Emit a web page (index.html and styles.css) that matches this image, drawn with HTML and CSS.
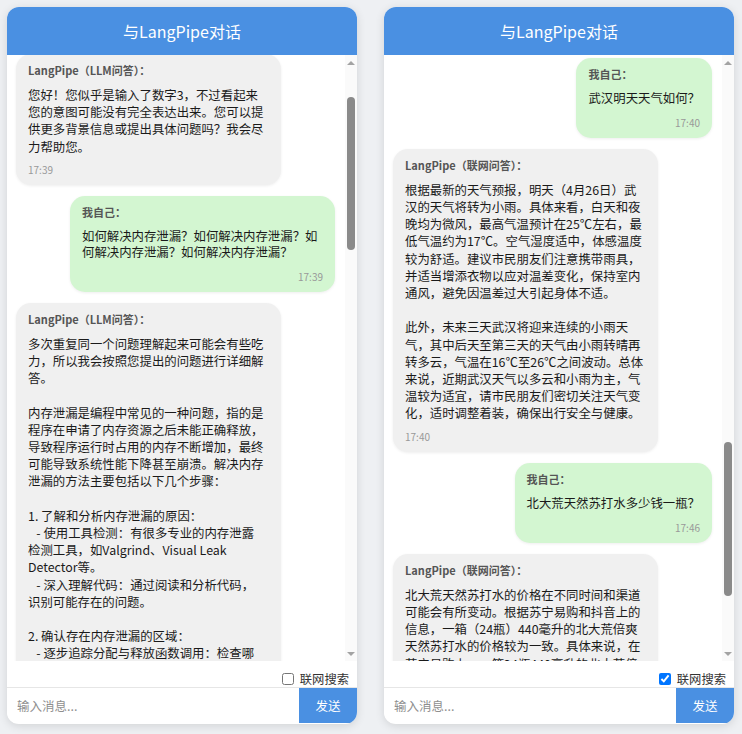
FILE: index.html
```html
<!DOCTYPE html>
<html lang="zh-CN">
<head>
<meta charset="utf-8">
<title>与LangPipe对话</title>
<link rel="stylesheet" href="styles.css">
</head>
<body>
<div class="app">
  <section class="panel">
    <header class="panel-header">与LangPipe对话</header>
    <div class="chat-body">
      <div class="messages messages--scrolled">
        <div class="bubble bubble--bot bubble--full">
          <div class="sender">LangPipe（LLM问答）：</div>
<p class="text">您好！您似乎是输入了数字3，不过看起来
您的意图可能没有完全表达出来。您可以提
供更多背景信息或提出具体问题吗？我会尽
力帮助您。</p>
          <div class="time">17:39</div>
        </div>
        <div class="bubble bubble--user bubble--full">
          <div class="sender">我自己：</div>
<p class="text">如何解决内存泄漏？如何解决内存泄漏？如
何解决内存泄漏？如何解决内存泄漏？</p>
          <div class="time">17:39</div>
        </div>
        <div class="bubble bubble--bot bubble--full">
          <div class="sender">LangPipe（LLM问答）：</div>
<p class="text">多次重复同一个问题理解起来可能会有些吃
力，所以我会按照您提出的问题进行详细解
答。

内存泄漏是编程中常见的一种问题，指的是
程序在申请了内存资源之后未能正确释放，
导致程序运行时占用的内存不断增加，最终
可能导致系统性能下降甚至崩溃。解决内存
泄漏的方法主要包括以下几个步骤：

1. 了解和分析内存泄漏的原因：
   - 使用工具检测：有很多专业的内存泄露
检测工具，如Valgrind、Visual Leak
Detector等。
   - 深入理解代码：通过阅读和分析代码，
识别可能存在的问题。

2. 确认存在内存泄漏的区域：
   - 逐步追踪分配与释放函数调用：检查哪
些内存分配之后没有对应的释放操作。</p>
          <div class="time">17:39</div>
        </div>
      </div>
      <div class="scrollbar">
        <span class="arrow arrow--up"></span>
        <div class="track"><div class="thumb" style="margin-top:27px;height:153px"></div></div>
        <span class="arrow arrow--down"></span>
      </div>
    </div>
    <div class="options">
      <label class="toggle"><input type="checkbox" class="toggle-box">联网搜索</label>
    </div>
    <div class="composer">
      <input class="composer-input" type="text" placeholder="输入消息...">
      <button class="send-btn" type="button">发送</button>
    </div>
  </section>

  <section class="panel">
    <header class="panel-header">与LangPipe对话</header>
    <div class="chat-body">
      <div class="messages">
        <div class="bubble bubble--user">
          <div class="sender">我自己：</div>
<p class="text">武汉明天天气如何？</p>
          <div class="time">17:40</div>
        </div>
        <div class="bubble bubble--bot bubble--full">
          <div class="sender">LangPipe（联网问答）：</div>
<p class="text">根据最新的天气预报，明天（4月26日）武
汉的天气将转为小雨。具体来看，白天和夜
晚均为微风，最高气温预计在25℃左右，最
低气温约为17℃。空气湿度适中，体感温度
较为舒适。建议市民朋友们注意携带雨具，
并适当增添衣物以应对温差变化，保持室内
通风，避免因温差过大引起身体不适。

此外，未来三天武汉将迎来连续的小雨天
气，其中后天至第三天的天气由小雨转晴再
转多云，气温在16℃至26℃之间波动。总体
来说，近期武汉天气以多云和小雨为主，气
温较为适宜，请市民朋友们密切关注天气变
化，适时调整着装，确保出行安全与健康。</p>
          <div class="time">17:40</div>
        </div>
        <div class="bubble bubble--user">
          <div class="sender">我自己：</div>
<p class="text">北大荒天然苏打水多少钱一瓶？</p>
          <div class="time">17:46</div>
        </div>
        <div class="bubble bubble--bot bubble--full">
          <div class="sender">LangPipe（联网问答）：</div>
<p class="text">北大荒天然苏打水的价格在不同时间和渠道
可能会有所变动。根据苏宁易购和抖音上的
信息，一箱（24瓶）440毫升的北大荒倍爽
天然苏打水的价格较为一致。具体来说，在
苏宁易购上，一箱24瓶440毫升的北大荒倍
爽天然苏打水售价约为几十元。</p>
          <div class="time">17:46</div>
        </div>
      </div>
      <div class="scrollbar">
        <span class="arrow arrow--up"></span>
        <div class="track"><div class="thumb" style="margin-top:372px;height:154px"></div></div>
        <span class="arrow arrow--down"></span>
      </div>
    </div>
    <div class="options">
      <label class="toggle"><input type="checkbox" class="toggle-box" checked>联网搜索</label>
    </div>
    <div class="composer">
      <input class="composer-input" type="text" placeholder="输入消息...">
      <button class="send-btn" type="button">发送</button>
    </div>
  </section>
</div>
</body>
</html>
```
FILE: styles.css
```css
* { box-sizing: border-box; }

html, body { margin: 0; }

body {
  background: #eef0f3;
  font-family: "Microsoft YaHei", "Noto Sans CJK SC", sans-serif;
  padding: 7px 8px 10px 7px;
}

.app {
  display: flex;
  gap: 27px;
}

.panel {
  width: 350px;
  height: 717px;
  background: #fff;
  border-radius: 12px;
  overflow: hidden;
  box-shadow: 0 2px 10px rgba(0, 0, 0, 0.12);
  display: flex;
  flex-direction: column;
}

.panel-header {
  flex: none;
  height: 48px;
  background: #4a90e2;
  color: #fff;
  font-size: 16px;
  display: flex;
  align-items: center;
  justify-content: center;
}

.chat-body {
  flex: none;
  height: 606px;
  display: flex;
}

.messages {
  flex: 1;
  min-width: 0;
  overflow: hidden;
  padding: 3px 10px 0 9px;
  display: flex;
  flex-direction: column;
  gap: 11px;
}

.messages--scrolled { padding-top: 0; }
.messages--scrolled > .bubble:first-child { margin-top: -1px; }

.bubble {
  flex: none;
  max-width: 265px;
  border-radius: 15px;
  padding: 10px 12px 9.5px;
  box-shadow: 0 1px 3px rgba(0, 0, 0, 0.07);
}

.bubble--bot {
  align-self: flex-start;
  background: #f0f0f0;
}

.bubble--user {
  align-self: flex-end;
  background: #d3f6d1;
  padding-bottom: 8.5px;
}

.bubble--full { width: 265px; }

.sender {
  font-size: 11px;
  font-weight: 700;
  color: #555;
  line-height: 13px;
  margin-bottom: 10px;
}

.text {
  margin: 0;
  font-size: 12.4px;
  line-height: 17.2px;
  color: #1a1a1a;
  white-space: pre-wrap;
}

.bubble--user .text { line-height: 15.7px; }

.time {
  font-size: 10px;
  line-height: 13px;
  color: #999;
  margin-top: 7px;
}

.bubble--user .time {
  text-align: right;
  margin-top: 9.5px;
}

.scrollbar {
  flex: none;
  width: 12px;
  background: #fafafa;
  display: flex;
  flex-direction: column;
}

.arrow {
  flex: none;
  height: 15px;
  display: flex;
  align-items: center;
  justify-content: center;
}

.arrow::before {
  content: "";
  border-left: 4px solid transparent;
  border-right: 4px solid transparent;
  border-bottom: 4px solid #a3a3a3;
}

.arrow--down::before {
  border-bottom: 0;
  border-top: 4px solid #a3a3a3;
}

.track {
  flex: 1;
  display: flex;
  justify-content: center;
}

.thumb {
  width: 8px;
  background: #8a8a8a;
  border-radius: 4px;
}

.options {
  flex: none;
  height: 27px;
  display: flex;
  justify-content: flex-end;
  align-items: flex-end;
  padding: 0 8px 0 0;
  border-bottom: 1px solid #e6e6e6;
}

.toggle {
  display: flex;
  align-items: center;
  height: 17px;
  font-size: 12.3px;
  color: #333;
}

.toggle-box {
  width: 12px;
  height: 12px;
  margin: 0 6px 0 0;
}

.composer {
  flex: none;
  height: 35px;
  display: flex;
}

.composer-input {
  flex: 1;
  min-width: 0;
  border: 0;
  outline: 0;
  padding: 0 10px;
  font-family: inherit;
  font-size: 12.5px;
  color: #333;
  background: #fff;
}

.composer-input::placeholder { color: #8f8f8f; }

.send-btn {
  flex: none;
  width: 58px;
  border: 0;
  background: #4a90e2;
  color: #fff;
  font-family: inherit;
  font-size: 12.5px;
}
```
